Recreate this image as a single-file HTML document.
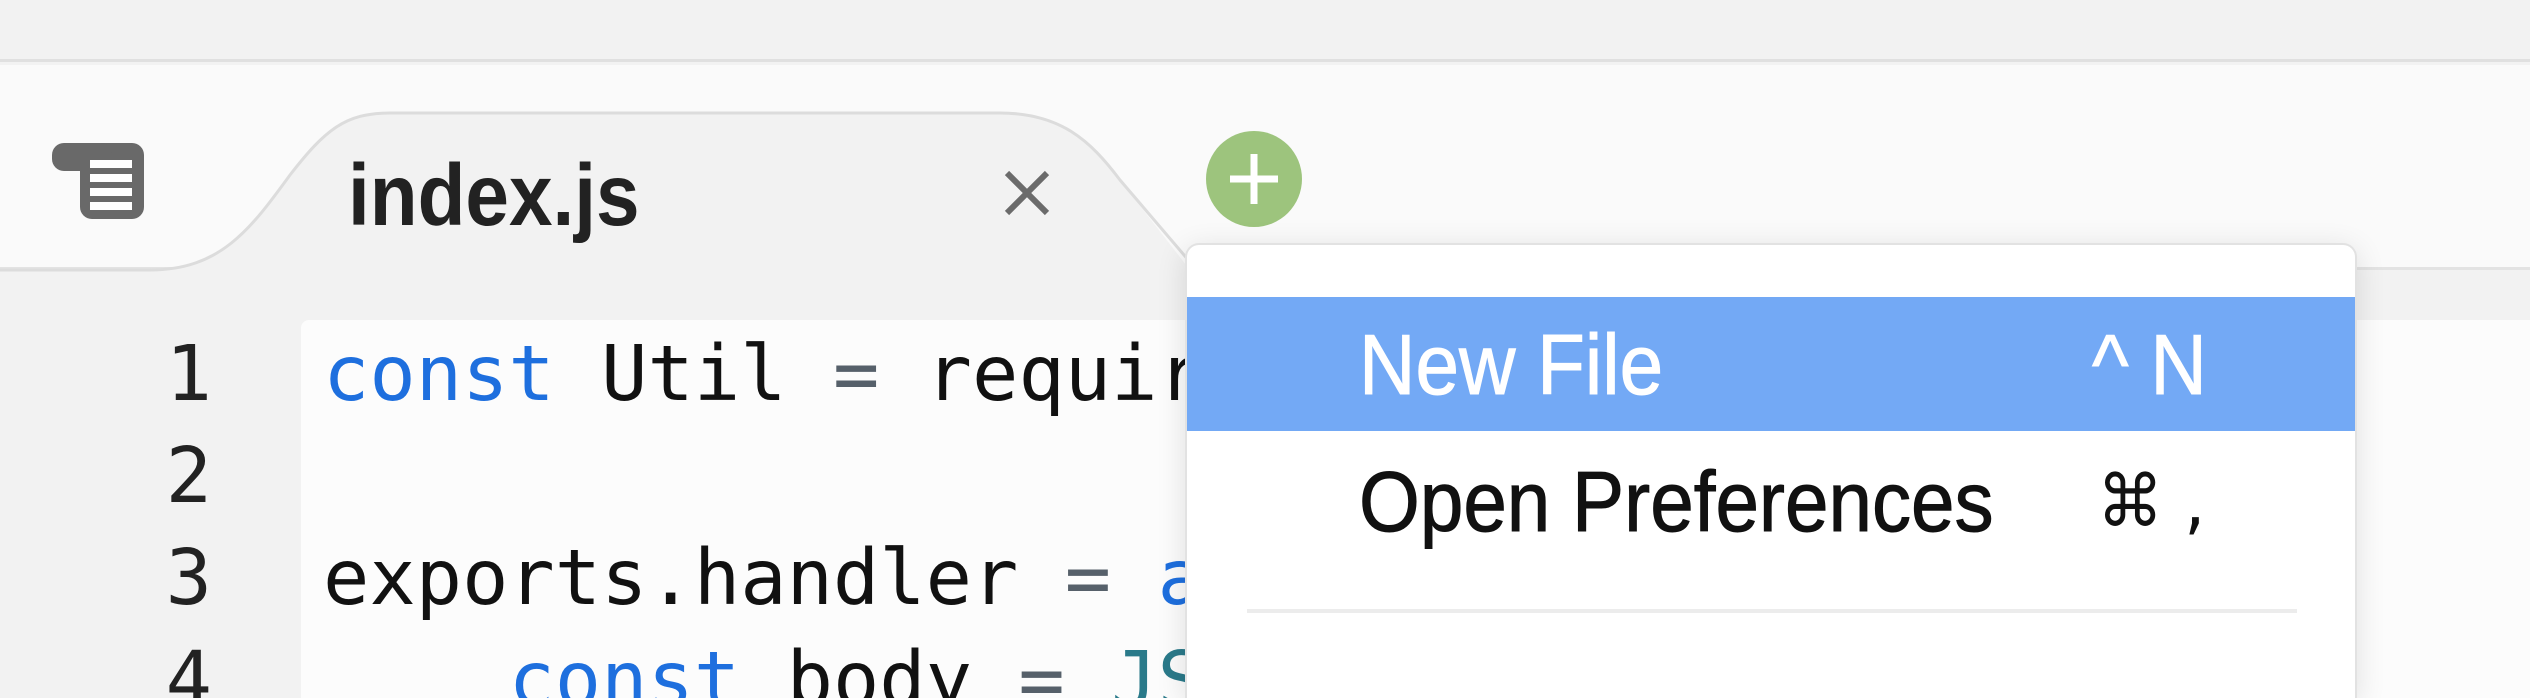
<!DOCTYPE html>
<html><head><meta charset="utf-8"><style>
*{margin:0;padding:0;box-sizing:border-box}
html{width:2530px;height:698px;overflow:hidden}
body{width:2530px;height:698px;overflow:hidden;background:#f2f2f2;position:relative;font-family:"Liberation Sans",Arial,sans-serif}
.top{position:absolute;left:0;top:0;width:2530px;height:62px;background:#f2f2f2;border-bottom:3px solid #e0e0e0}
.bar{position:absolute;left:0;top:65px;width:2530px;height:205px;background:#fafafa;border-bottom:3px solid #e3e3e3}
.gutter{position:absolute;left:0;top:272px;width:2530px;height:426px;background:#f2f2f2}
.code{position:absolute;left:301px;top:320px;width:2229px;height:378px;background:#fcfcfc;border-radius:8px 0 0 0}
.ln{position:absolute;left:150px;width:62px;text-align:right;font-family:"DejaVu Sans Mono","Liberation Mono",monospace;font-size:77px;color:#222;line-height:1}
.cl{position:absolute;left:323px;font-family:"DejaVu Sans Mono","Liberation Mono",monospace;font-size:77px;color:#111;white-space:pre;line-height:1}
.k{color:#1e6fde}.o{color:#56606a}.t{color:#2a7a8a}
.menu{position:absolute;left:1185px;top:243px;width:1172px;height:455px;background:#fff;border:2px solid #e2e2e2;border-bottom:none;border-radius:14px 14px 0 0;box-shadow:0 6px 30px rgba(0,0,0,.12);z-index:5;overflow:hidden}
.hl{position:absolute;left:0;top:52px;width:1168px;height:134px;background:#73a9f5}
.mi{position:absolute;font-size:85px;line-height:1;white-space:pre;transform:scaleX(.92);transform-origin:0 0;-webkit-text-stroke:1px currentColor}
</style></head><body>
<div class="top"></div>
<div class="bar"></div>
<div class="gutter"></div>
<svg style="position:absolute;left:0;top:100px" width="1300" height="230" viewBox="0 100 1300 230">
<path d="M0 270 L150 270 C220 270 250 230 290 175 C325 130 345 113 390 113 L1000 113 C1060 113 1090 140 1120 180 L1190 270 L1190 330 L0 330 Z" fill="#f2f2f2"/>
<path d="M0 270 L150 270 C220 270 250 230 290 175 C325 130 345 113 390 113 L1000 113 C1060 113 1090 140 1120 180 L1190 262" fill="none" stroke="#dcdcdc" stroke-width="3"/>
</svg>
<svg style="position:absolute;left:50px;top:140px" width="96" height="80" viewBox="0 0 96 80">
<rect x="30" y="3" width="64" height="76" rx="12" fill="#696969"/>
<rect x="2" y="3" width="60" height="28" rx="12" fill="#696969"/>
<rect x="40" y="20" width="42" height="8" fill="#fff"/>
<rect x="40" y="34" width="42" height="8" fill="#fff"/>
<rect x="40" y="48" width="42" height="8" fill="#fff"/>
<rect x="40" y="62" width="42" height="8" fill="#fff"/>
</svg>
<div style="position:absolute;left:348px;top:152px;font-size:87px;font-weight:bold;color:#222;line-height:1;transform:scaleX(.9);transform-origin:0 0">index.js</div>
<svg style="position:absolute;left:1004px;top:170px" width="46" height="46" viewBox="0 0 46 46"><path d="M3 3L43 43M43 3L3 43" stroke="#6b6b6b" stroke-width="6"/></svg>
<svg style="position:absolute;left:1205px;top:130px" width="98" height="98" viewBox="0 0 98 98"><circle cx="49" cy="49" r="48" fill="#9dc47d"/><path d="M49 24V74M25 49H73" stroke="#fff" stroke-width="7"/></svg>
<div class="code"></div>
<div class="ln" style="top:336px">1</div>
<div class="ln" style="top:438px">2</div>
<div class="ln" style="top:540px">3</div>
<div class="ln" style="top:642px">4</div>
<div class="cl" style="top:336px"><span class="k">const</span> Util <span class="o">=</span> require</div>
<div class="cl" style="top:540px">exports.handler <span class="o">=</span> <span class="k">a</span></div>
<div class="cl" style="top:642px">    <span class="k">const</span> body <span class="o">=</span> <span class="t">JS</span></div>
<div class="menu">
<div class="hl"></div>
<div class="mi" style="left:172px;top:78px;color:#fff">New File</div>
<div class="mi" style="left:905px;top:78px;color:#fff">^ N</div>
<div class="mi" style="left:172px;top:215px;color:#111">Open Preferences</div>
<div class="mi" style="left:910px;top:220px;color:#111;font-family:'DejaVu Sans',sans-serif;font-size:72px;-webkit-text-stroke:0">⌘ ,</div>
<div style="position:absolute;left:60px;top:364px;width:1050px;height:4px;background:#ececec"></div>
</div>
</body></html>
